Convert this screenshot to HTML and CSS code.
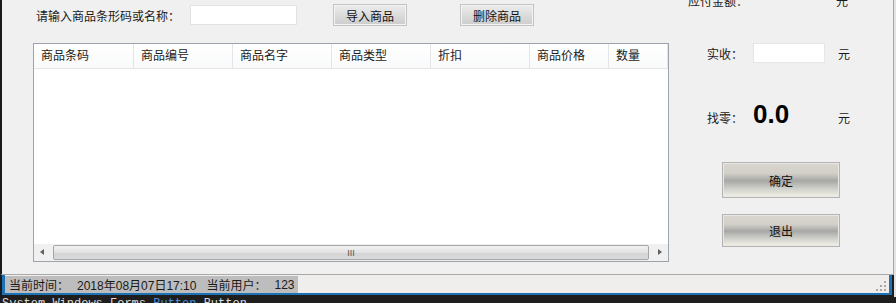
FILE: index.html
```html
<!DOCTYPE html>
<html lang="zh-CN">
<head>
    <meta charset="UTF-8">
    <title>收银</title>
    <link rel="stylesheet" href="styles.css">
</head>
<body>
    <div class="screen">
        <div class="window">
            <div class="main">
                <div class="search-row">
                    <span class="search-label">请输入商品条形码或名称：</span>
                    <input type="text" class="search-input">
                    <button class="btn btn-small btn-import">导入商品</button>
                    <button class="btn btn-small btn-delete">删除商品</button>
                </div>

                <div class="list">
                    <div class="list-head">
                        <span class="col col-first">商品条码</span>
                        <span class="col col-wide">商品编号</span>
                        <span class="col col-wide">商品名字</span>
                        <span class="col col-wide">商品类型</span>
                        <span class="col col-wide">折扣</span>
                        <span class="col col-mid">商品价格</span>
                        <span class="col col-narrow">数量</span>
                    </div>
                    <div class="list-body"></div>
                    <div class="hscroll">
                        <span class="arrow arrow-left"></span>
                        <div class="thumb"><span class="thumb-grip">III</span></div>
                        <span class="arrow arrow-right"></span>
                    </div>
                </div>
            </div>

            <div class="side">
                <div class="pay-row pay-due">
                    <span class="pay-label">应付金额：</span>
                    <span class="unit">元</span>
                </div>
                <div class="pay-row pay-paid">
                    <span class="pay-label">实收：</span>
                    <input type="text" class="paid-input">
                    <span class="unit">元</span>
                </div>
                <div class="pay-row pay-change">
                    <span class="pay-label">找零：</span>
                    <span class="change-value">0.0</span>
                    <span class="unit">元</span>
                </div>
                <button class="btn btn-big btn-ok">确定</button>
                <button class="btn btn-big btn-exit">退出</button>
            </div>
        </div>

        <div class="statusbar">
            <div class="status-inner">
                <div class="status-panel">
                    <span>当前时间：</span>
                    <span class="status-value">2018年08月07日17:10</span>
                    <span class="status-gap">当前用户：</span>
                    <span class="status-value">123</span>
                </div>
                <svg class="size-grip" width="12" height="12" viewBox="0 0 12 12">
                    <rect x="9" y="1" width="2" height="2" fill="#a8a8a8"/>
                    <rect x="5" y="5" width="2" height="2" fill="#a8a8a8"/>
                    <rect x="9" y="5" width="2" height="2" fill="#a8a8a8"/>
                    <rect x="1" y="9" width="2" height="2" fill="#a8a8a8"/>
                    <rect x="5" y="9" width="2" height="2" fill="#a8a8a8"/>
                    <rect x="9" y="9" width="2" height="2" fill="#a8a8a8"/>
                </svg>
            </div>
        </div>

        <div class="taskbar">System.Windows.Forms.<span class="hl">Button</span> Button</div>
    </div>
</body>
</html>
```

FILE: styles.css
```css
body {
    margin: 0;
    padding: 0;
    font-family: "Liberation Sans", "Noto Sans CJK SC", sans-serif;
    font-size: 12px;
    color: #1a1a1a;
    background: #1e1e1e;
    overflow: hidden;
}

.screen {
    width: 896px;
    height: 303px;
    overflow: hidden;
    background: #e4e4e4;
}

.window {
    display: grid;
    grid-template-columns: 678px 1fr;
    width: 891px;
    height: 274px;
    background: #f0f0f0;
    border-left: 2px solid #1a1a1a;
    border-right: 1px solid #a7a7a7;
    border-bottom: 1px solid #a9a9a9;
    overflow: hidden;
}

.main {
    padding-left: 31px;
}

.search-row {
    display: flex;
    align-items: center;
    height: 22px;
    padding-top: 4px;
    margin-bottom: 17px;
}

.search-label {
    margin-left: 3px;
    width: 154px;
}

.search-input,
.paid-input {
    box-sizing: border-box;
    height: 20px;
    border: 1px solid #e2e2e2;
    background: #fff;
    padding: 0 3px;
    outline: none;
}

.search-input {
    width: 107px;
}

.btn {
    box-sizing: border-box;
    padding: 0;
    font-family: "Liberation Sans", "Noto Sans CJK SC", sans-serif;
    font-size: 12px;
    color: #111;
    cursor: pointer;
}

.btn-small {
    width: 74px;
    height: 22px;
    border: 1px solid #c4c4c4;
    box-shadow: inset 0 0 0 1px #f4f4f4;
    background: linear-gradient(#ececec, #dcdcdc 50%, #cdcdcd);
}

.btn-import {
    margin-left: 36px;
}

.btn-delete {
    margin-left: 53px;
}

.list {
    display: flex;
    flex-direction: column;
    width: 636px;
    height: 219px;
    box-sizing: border-box;
    border: 1px solid #9da3ab;
    background: #fff;
}

.list-head {
    display: flex;
    height: 24px;
    border-bottom: 1px solid #e6e6e6;
    background: linear-gradient(#fff, #f9fafb);
}

.col {
    box-sizing: border-box;
    padding-left: 7px;
    line-height: 24px;
    border-right: 1px solid #e3e5e8;
}

.col-first {
    width: 100px;
}

.col-wide {
    width: 99px;
}

.col-mid {
    width: 79px;
}

.col-narrow {
    width: 59px;
}

.list-body {
    flex: 1;
}

.hscroll {
    display: flex;
    align-items: center;
    height: 17px;
    background: #f0f0f0;
}

.arrow {
    width: 17px;
    height: 17px;
    position: relative;
}

.arrow::after {
    content: "";
    position: absolute;
    top: 5px;
    border-top: 3.5px solid transparent;
    border-bottom: 3.5px solid transparent;
}

.arrow-left::after {
    left: 6px;
    border-right: 4px solid #606060;
}

.arrow-right::after {
    left: 7px;
    border-left: 4px solid #606060;
}

.thumb {
    flex: 1;
    height: 15px;
    margin: 0 2px;
    box-sizing: border-box;
    border: 1px solid #a6a6a6;
    border-radius: 2px;
    background: linear-gradient(#f2f2f2, #e2e2e2 50%, #d4d4d4 55%, #dadada);
    display: flex;
    justify-content: center;
    align-items: center;
}

.thumb-grip {
    font-size: 9px;
    color: #505050;
    font-family: "Liberation Sans", sans-serif;
}

.side {
    display: flex;
    flex-direction: column;
    align-items: flex-start;
}

.pay-row {
    display: flex;
    align-items: center;
    padding-left: 27px;
}

.pay-label {
    width: 46px;
}

.pay-due {
    margin-top: -7px;
    height: 14px;
    padding-left: 8px;
}

.pay-due .pay-label {
    width: 148px;
}

.pay-paid {
    margin-top: 36px;
    height: 20px;
}

.paid-input {
    width: 72px;
    border-color: #e6e6e6;
}

.pay-paid .unit {
    margin-left: 13px;
}

.pay-change {
    margin-top: 38px;
    align-items: baseline;
}

.change-value {
    width: 85px;
    font-family: "Liberation Sans", sans-serif;
    font-size: 26px;
    font-weight: bold;
    line-height: 26px;
    color: #000;
}

.btn-big {
    width: 118px;
    margin-left: 42px;
    border: 1px solid #b4b4b4;
    background: linear-gradient(#d9d6cf, #d3d0c9 30%, #a7a7a5 52%, #cfcfca 75%, #f2f2e8);
    box-shadow: inset 0 0 0 1px #e9e7e1;
}

.btn-ok {
    margin-top: 35px;
    height: 36px;
}

.btn-exit {
    margin-top: 16px;
    height: 33px;
}

.statusbar {
    width: 892px;
    height: 22px;
    border-left: 2px solid #1a1a1a;
    background: #1e1e1e;
}

.status-inner {
    position: relative;
    display: flex;
    align-items: center;
    height: 20px;
    box-sizing: border-box;
    border-left: 3px solid #1d72b6;
    border-right: 3px solid #1d72b6;
    border-bottom: 2px solid #1d72b6;
    background: #f0eeec;
    margin-right: 2px;
}

.status-panel {
    display: flex;
    align-items: center;
    width: 293px;
    height: 17px;
    margin-top: 1px;
    padding-left: 4px;
    box-sizing: border-box;
    background: #bdbdbd;
    color: #1a1a1a;
}

.status-value {
    margin-left: 8px;
}

.status-gap {
    margin-left: 10px;
}

.size-grip {
    position: absolute;
    right: 2px;
    bottom: 1px;
}

.taskbar {
    height: 6px;
    padding-left: 2px;
    background: #1e1e1e;
    color: #dcdcdc;
    font-family: "Liberation Mono", monospace;
    font-size: 12px;
    line-height: 14px;
    white-space: nowrap;
}

.taskbar .hl {
    color: #4a8fd6;
}
```
